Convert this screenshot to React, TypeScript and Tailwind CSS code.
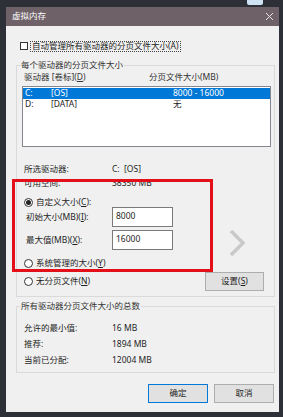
import React from "react";

const font = { fontFamily: '"Noto Sans", "Noto Sans CJK SC", sans-serif' };

function Radio({ checked }: { checked?: boolean }) {
  return (
    <span className="w-[9px] h-[9px] rounded-full border border-[#333] bg-white flex items-center justify-center shrink-0">
      {checked && <span className="w-[5px] h-[5px] rounded-full bg-[#222]" />}
    </span>
  );
}

export default function App() {
  return (
    <div
      className="w-[283px] h-[417px] bg-[#2d3037] relative overflow-hidden text-[8.5px] leading-none text-[#1e1e1e]"
      style={font}
    >
      <div className="absolute left-[247px] top-0 w-[16px] h-[5px] bg-[#cfe3f4] rounded-b-[2px]" />
      <div className="ml-[6px] mt-[7px] w-[273px] h-[405px] flex flex-col">
        {/* title bar */}
        <div className="h-[19px] bg-[#6e6168] flex items-center justify-between pl-[6px] pr-[5px] text-white">
          <span>虚拟内存</span>
          <svg width="9" height="9" viewBox="0 0 9 9">
            <path d="M1 1 L8 8 M8 1 L1 8" stroke="#e8e4e6" strokeWidth="1" />
          </svg>
        </div>
        {/* body */}
        <div className="flex-1 bg-[#f0f0f0] flex flex-col">
          {/* auto manage */}
          <div className="mt-[14px] h-[12px] flex items-center pl-[14px]">
            <span className="w-[8px] h-[8px] border border-[#333] bg-white shrink-0" />
            <span className="ml-[2px] h-[11px] flex items-center border border-dotted border-[#444] px-[1px]">
              自动管理所有驱动器的分页文件大小(A)
            </span>
          </div>

          {/* group 1 */}
          <div className="mt-[13px] ml-[10px] w-[259px] h-[232px] border border-[#dadada] relative flex flex-col">
            <span className="absolute -top-[5px] left-[3px] bg-[#f0f0f0] px-[1px] text-[#333]">
              每个驱动器的分页文件大小
            </span>
            <div className="mt-[6px] h-[10px] flex items-center text-[#333]">
              <span className="ml-[7px] w-[125px]">驱动器 [卷标](<span className="underline">D</span>)</span>
              <span>分页文件大小(MB)</span>
            </div>
            <div className="mt-[4px] ml-[5px] w-[249px] h-[61px] bg-white border border-[#828790] pt-[1px]">
              <div className="h-[11px] bg-[#0078d7] text-white flex items-center">
                <span className="ml-[2px] w-[26px]">C:</span>
                <span className="w-[122px]">[OS]</span>
                <span>8000 - 16000</span>
              </div>
              <div className="h-[11px] flex items-center">
                <span className="ml-[2px] w-[26px]">D:</span>
                <span className="w-[122px]">[DATA]</span>
                <span>无</span>
              </div>
            </div>
            <div className="mt-[17px] h-[10px] flex items-center pl-[7px]">
              <span className="w-[88px]">所选驱动器:</span>
              <span>C:&nbsp;&nbsp;[OS]</span>
            </div>
            <div className="mt-[4px] h-[10px] flex items-center pl-[7px]">
              <span className="w-[88px]">可用空间:</span>
              <span>38350 MB</span>
            </div>
            <div className="mt-[9px] h-[10px] flex items-center pl-[7px] gap-[3px]">
              <Radio checked />
              <span>自定义大小(<span className="underline">C</span>):</span>
            </div>
            <div className="h-[20px] flex items-center pl-[9px]">
              <span className="w-[86px]">初始大小(MB)(<span className="underline">I</span>):</span>
              <div className="w-[61px] h-[20px] bg-white border border-[#7a7a7a] pl-[3px] pt-[4px]">8000</div>
            </div>
            <div className="mt-[3px] h-[20px] flex items-center pl-[9px]">
              <span className="w-[86px]">最大值(MB)(<span className="underline">X</span>):</span>
              <div className="w-[61px] h-[20px] bg-white border border-[#7a7a7a] pl-[3px] pt-[4px]">16000</div>
            </div>
            <div className="mt-[8px] h-[10px] flex items-center pl-[7px] gap-[3px]">
              <Radio />
              <span>系统管理的大小(<span className="underline">Y</span>)</span>
            </div>
            <div className="mt-[4px] h-[19px] flex items-center pl-[7px]">
              <div className="flex items-center gap-[3px] w-[181px]">
                <Radio />
                <span>无分页文件(<span className="underline">N</span>)</span>
              </div>
              <div className="w-[59px] h-[19px] bg-[#e1e1e1] border border-[#adadad] flex items-center justify-center">
                设置(<span className="underline">S</span>)
              </div>
            </div>
          </div>

          {/* group 2 */}
          <div className="mt-[9px] ml-[10px] w-[259px] h-[67px] border border-[#dadada] relative flex flex-col">
            <span className="absolute -top-[5px] left-[3px] bg-[#f0f0f0] px-[1px] text-[#333]">
              所有驱动器分页文件大小的总数
            </span>
            <div className="mt-[16px] h-[10px] flex items-center pl-[7px]">
              <span className="w-[88px]">允许的最小值:</span>
              <span>16 MB</span>
            </div>
            <div className="mt-[6px] h-[10px] flex items-center pl-[7px]">
              <span className="w-[88px]">推荐:</span>
              <span>1894 MB</span>
            </div>
            <div className="mt-[6px] h-[10px] flex items-center pl-[7px]">
              <span className="w-[88px]">当前已分配:</span>
              <span>12004 MB</span>
            </div>
          </div>

          {/* buttons */}
          <div className="mt-[11px] flex justify-end gap-[6px] pr-[5px]">
            <div className="w-[60px] h-[19px] bg-[#e1e1e1] border border-[#0078d7] flex items-center justify-center">
              确定
            </div>
            <div className="w-[60px] h-[19px] bg-[#e1e1e1] border border-[#adadad] flex items-center justify-center">
              取消
            </div>
          </div>
        </div>
      </div>

      {/* red highlight */}
      <div className="absolute left-[12px] top-[179px] w-[201px] h-[93px] border-[3px] border-[#e3101a]" />
      {/* chevron overlay */}
      <svg className="absolute left-[229px] top-[229px]" width="16" height="28" viewBox="0 0 16 28">
        <path d="M2 2 L14 14 L2 26" stroke="#c9c9c9" strokeWidth="3.5" fill="none" />
      </svg>
    </div>
  );
}
